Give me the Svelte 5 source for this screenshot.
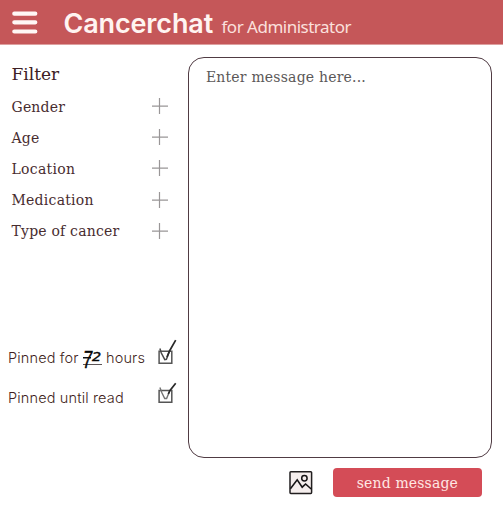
<script>
  const filters = [
    { name: 'Gender', spacing: 0.2 },
    { name: 'Age', spacing: 0.2 },
    { name: 'Location', spacing: 0.3 },
    { name: 'Medication', spacing: 0.25 },
    { name: 'Type of cancer', spacing: 0.2 }
  ];
</script>

<div class="app">
  <header>
    <svg class="menu" width="26" height="24" viewBox="0 0 26 24" aria-label="Menu">
      <path d="M2.3 2.7H23.3M2.3 11.3H23.3M2.3 20.5H23.3" stroke="#fff7f5" stroke-width="4.2" stroke-linecap="round" />
    </svg>
    <h1>Cancerchat</h1>
    <span class="role">for Administrator</span>
  </header>
  <main>
    <aside>
      <h2>Filter</h2>
      <ul>
        {#each filters as f}
          <li>
            <span style="letter-spacing: {f.spacing}px">{f.name}</span>
            <svg width="16" height="17" viewBox="0 0 16 17">
              <path d="M0 8.2H16M7.5 0V16" stroke="#999697" stroke-width="1.2" />
            </svg>
          </li>
        {/each}
      </ul>
      <div class="pin first">
        <span class="label hours">Pinned for</span>
        <span class="num"><span class="seven">7</span><span class="two">2</span></span>
        <span class="label after">hours</span>
        <svg class="check" width="21" height="26" viewBox="0 0 21 26">
          <path d="M2.1 12.2H14.8V24.2H2.1Z" fill="none" stroke="#555" stroke-width="1.5" />
          <path d="M2.9 9.5L4.3 14L7.8 20.6L9.4 20.3L12.5 12.3" fill="none" stroke="#4a4a4a" stroke-width="1.5" />
          <path d="M10 18L12.5 12L18.7 1.2" fill="none" stroke="#292929" stroke-width="1.7" />
        </svg>
      </div>
      <div class="pin second">
        <span class="label until">Pinned until read</span>
        <svg class="check" width="21" height="22" viewBox="0 0 21 22">
          <path d="M2.1 8.4H14.8V20.2H2.1Z" fill="none" stroke="#555" stroke-width="1.5" />
          <path d="M2.9 5.5L5 11L7.7 16.5L9.6 16.5L12.5 9.5" fill="none" stroke="#737373" stroke-width="1.4" />
          <path d="M11.3 12L13 8.5L18.7 1.2" fill="none" stroke="#292929" stroke-width="1.7" />
        </svg>
      </div>
    </aside>
    <section>
      <textarea placeholder="Enter message here..."></textarea>
      <div class="actions">
        <svg width="25" height="25" viewBox="0 0 25 25" aria-label="Add image">
          <rect x="2" y="1.8" width="21.6" height="21.6" rx=".8" fill="#f5eeed" stroke="#211e1f" stroke-width="1.5" />
          <path d="M2.4 18.8L9.2 9.8L14.2 17.2L17.6 14L23.2 19" fill="none" stroke="#161415" stroke-width="1.6" />
          <circle cx="16.4" cy="8.2" r="2.7" fill="none" stroke="#161415" stroke-width="1.5" />
        </svg>
        <button>send message</button>
      </div>
    </section>
  </main>
</div>

<style>
  .app {
    width: 503px;
    height: 507px;
    overflow: hidden;
    background: #fff;
    color: #482c2f;
    font-family: "DejaVu Serif", serif;
  }
  header {
    box-sizing: border-box;
    height: 45px;
    background: #c55759;
    border-bottom: 1px solid #dda09f;
    display: flex;
    align-items: flex-start;
    padding-left: 12px;
    color: #fff4f1;
  }
  .menu { margin-top: 11px; }
  h1 {
    margin: 8px 0 0 25.5px;
    width: 150px;
    font: 600 27px/32px Inter, sans-serif;
    letter-spacing: -0.15px;
    white-space: nowrap;
  }
  .role {
    margin: 15px 0 0 8px;
    font: 17px/24px "Noto Sans", sans-serif;
    letter-spacing: -0.5px;
    color: #fbe0dd;
    white-space: nowrap;
  }
  main { display: flex; }
  aside { width: 188.4px; }
  h2 {
    margin: 17px 0 0 11.5px;
    font-size: 17px;
    line-height: 24px;
    font-weight: 400;
    color: #3d2024;
  }
  ul { list-style: none; margin: 5px 0 0; padding: 0 20.5px 0 11.5px; }
  li {
    height: 31.2px;
    display: flex;
    align-items: center;
    justify-content: space-between;
    font-size: 14px;
    white-space: nowrap;
  }
  .pin {
    display: flex;
    align-items: flex-start;
    padding-left: 8px;
    height: 26px;
    font: 350 14.5px/20px Inter, sans-serif;
    letter-spacing: 0.15px;
    color: #421f22;
    white-space: nowrap;
  }
  .first { margin-top: 92.5px; }
  .second { margin-top: 17px; }
  .label { margin-top: 9px; }
  .second .label { margin-top: 6px; }
  .num {
    display: flex;
    align-items: flex-start;
    box-sizing: border-box;
    width: 20px;
    height: 21px;
    margin: 9px 0 0 4px;
    letter-spacing: 0;
    color: #080808;
    background:
      linear-gradient(#111, #111) 0 9px / 8px 1.5px no-repeat,
      linear-gradient(#5c5557, #5c5557) 0 16px / 19px 1px no-repeat;
  }
  .seven {
    width: 9px;
    font: italic 400 23px/24px "Liberation Sans", sans-serif;
    transform: scaleX(.72);
    transform-origin: 0 0;
    -webkit-text-stroke: 0.4px #080808;
  }
  .two {
    width: 10px;
    font: italic 400 12px/18px "DejaVu Sans", sans-serif;
    transform: scaleX(1.2);
    transform-origin: 0 0;
    -webkit-text-stroke: 0.4px #080808;
  }
  .after { margin-left: 3.5px; }
  .hours { width: 70.5px; }
  .check { margin: 0 10.5px 0 auto; }
  section { width: 304px; padding-top: 12px; }
  textarea {
    display: block;
    box-sizing: border-box;
    width: 304px;
    height: 401px;
    margin: 0;
    padding: 9px 16.5px;
    resize: none;
    border: 1.5px solid #503b43;
    border-radius: 16px;
    outline: 0;
    background: #fff;
    font: 14px/20px "DejaVu Serif", serif;
    letter-spacing: 0.2px;
  }
  textarea::placeholder { color: #5b5858; opacity: 1; }
  .actions {
    display: flex;
    align-items: center;
    justify-content: flex-end;
    gap: 20px;
    padding: 10px 10.5px 0 0;
  }
  button {
    width: 149px;
    height: 29px;
    border: 0;
    border-radius: 4px;
    padding: 0;
    background: #d44c57;
    color: #ffe7e4;
    font: 14px/28px "DejaVu Serif", serif;
    letter-spacing: 0.15px;
  }
</style>
